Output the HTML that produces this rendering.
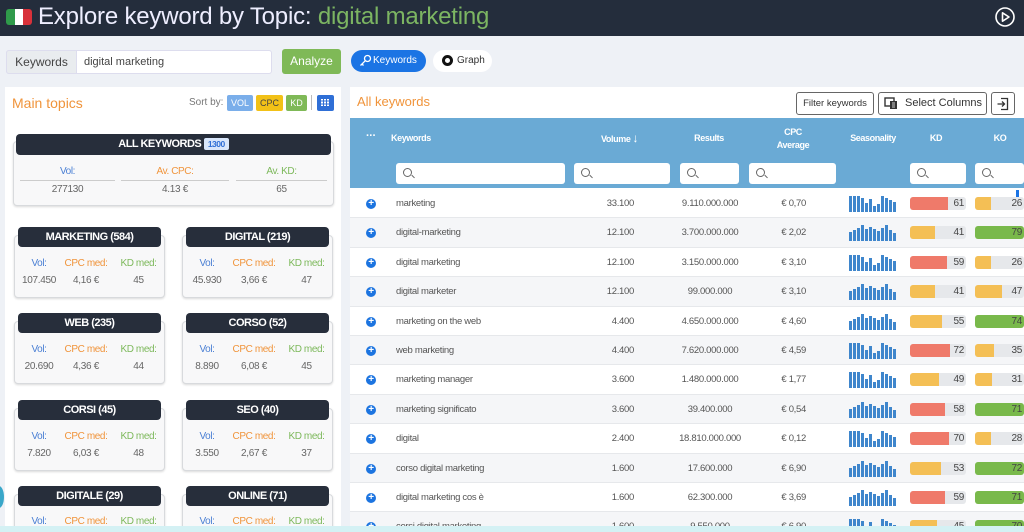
<!DOCTYPE html>
<html style="overflow:hidden;width:1024px;height:532px"><head><meta charset="utf-8"><style>
*{box-sizing:border-box;margin:0;padding:0}
html,body{overflow:hidden}
body{width:1024px;height:532px;background:#eef1f6;font-family:"Liberation Sans",sans-serif;font-size:11px;color:#555}
#w{position:relative;width:1024px;height:532px;overflow:hidden}
.a{position:absolute}
.hdr{left:0;top:0;width:1024px;height:36px;background:#242d3c}
.card{position:absolute;border:1px solid #d8dadd;border-radius:4px;background:#f8f8f9;box-shadow:0 1px 2px rgba(0,0,0,.15)}
.ch{position:absolute;background:#272e3b;color:#fff;border-radius:4px;font-size:11px;text-align:center;line-height:20px;height:20px;font-weight:bold;letter-spacing:-.5px}
.lb{position:absolute;font-size:10px;text-align:center;letter-spacing:-.4px}
.vl{position:absolute;font-size:10px;text-align:center;color:#666;letter-spacing:-.3px}
.bl{color:#4a7fd4}.or{color:#f0943b}.gr{color:#7cb85a}
.row{position:absolute;left:350px;width:674px;height:29.4px;border-bottom:1px solid #e6e8eb;font-size:9.5px;color:#555;letter-spacing:-.3px}
.row span{position:absolute;top:0;line-height:29px}
.pl{left:16px;top:10px!important;width:10px;height:10px;border-radius:50%;background:#1c74e0;line-height:10px!important;color:#fff;font-size:10px;text-align:center;font-weight:bold}
.kd,.ko{position:absolute;top:8px;height:13px;background:#e6e8eb;border-radius:3px;overflow:hidden}
.kd{left:560px;width:56px}.ko{left:625px;width:49px}
.kd i,.ko i{position:absolute;left:0;top:0;bottom:0}
.kd b,.ko b{position:absolute;right:2px;top:0;line-height:13px;font-weight:normal;font-size:10px;color:#444}
.r{background:#ef7a6a}.y{background:#f4bf55}.g{background:#79b94b}
.sb{position:absolute;top:6px;left:499px}
.srch{position:absolute;top:163px;height:21px;background:#fff;border-radius:3px}
.srch:before{content:"";position:absolute;left:7px;top:5px;width:7px;height:7px;border:1.3px solid #666;border-radius:50%}
.srch:after{content:"";position:absolute;left:15px;top:13px;width:4px;height:1.3px;background:#666;transform:rotate(45deg)}
.th{position:absolute;color:#fff;font-size:9px;font-weight:bold;text-align:center;letter-spacing:-.4px}
</style></head><body><div id="w">
<div class="a hdr"></div>
<div class="a" style="left:6px;top:9px;width:26px;height:16px;border-radius:3px;overflow:hidden;display:flex"><div style="flex:1;background:#2f9a4a"></div><div style="flex:1;background:#fff"></div><div style="flex:1;background:#d8313a"></div></div>
<div class="a" style="left:38px;top:3px;font-size:24px;color:#eef;line-height:28px;letter-spacing:-.2px">Explore keyword by Topic: <span style="color:#7cb562">digital marketing</span></div>
<svg class="a" style="left:994px;top:6px" width="22" height="22" viewBox="0 0 22 22"><circle cx="11" cy="11" r="9" fill="none" stroke="#fff" stroke-width="1.6"/><path d="M8.5 6.8 L15 11 L8.5 15.2 Z" fill="none" stroke="#fff" stroke-width="1.6" stroke-linejoin="round"/></svg>

<div class="a" style="left:6px;top:50px;width:266px;height:24px;border:1px solid #dde;border-radius:3px;background:#fff"></div>
<div class="a" style="left:6px;top:50px;width:71px;height:24px;background:#e9ecef;border-radius:3px 0 0 3px;border:1px solid #dde;font-size:12px;line-height:22px;text-align:center;color:#444">Keywords</div>
<div class="a" style="left:84px;top:50px;font-size:11px;line-height:24px;color:#444">digital marketing</div>
<div class="a" style="left:282px;top:49px;width:59px;height:25px;background:#7fb957;border-radius:3px;color:#fff;font-size:12px;line-height:25px;text-align:center">Analyze</div>
<div class="a" style="left:351px;top:50px;width:75px;height:22px;background:#1b74e4;border-radius:11px;color:#fff;font-size:10px;line-height:22px;padding-left:22px">Keywords</div>
<svg class="a" style="left:359px;top:54px" width="13" height="13" viewBox="0 0 13 13"><circle cx="8.5" cy="4.5" r="3" fill="none" stroke="#fff" stroke-width="1.3"/><path d="M6.3 6.7 L1.5 11.5 M3 10 L4.5 11.5" stroke="#fff" stroke-width="1.3" fill="none"/></svg>
<div class="a" style="left:433px;top:50px;width:59px;height:22px;background:#fff;border-radius:11px;font-size:10px;line-height:22px;padding-left:24px;color:#333">Graph</div>
<div class="a" style="left:442px;top:55px;width:11px;height:11px;border-radius:50%;border:3px solid #111;background:#fff"></div>

<div class="a" style="left:5px;top:87px;width:336px;height:445px;background:#fff"></div>
<div class="a" style="left:12px;top:95px;font-size:14px;color:#f0943b">Main topics</div>
<div class="a" style="left:189px;top:97px;font-size:10px;color:#777">Sort by:</div>
<div class="a" style="left:227px;top:95px;width:26px;height:16px;background:#7aaeea;border-radius:2px;color:#fff;font-size:9px;text-align:center;line-height:16px">VOL</div>
<div class="a" style="left:256px;top:95px;width:27px;height:16px;background:#f2c117;border-radius:2px;color:#444;font-size:9px;text-align:center;line-height:16px">CPC</div>
<div class="a" style="left:286px;top:95px;width:21px;height:16px;background:#7fb957;border-radius:2px;color:#fff;font-size:9px;text-align:center;line-height:16px">KD</div>
<div class="a" style="left:311px;top:95px;width:1px;height:15px;background:#bbb"></div>
<div class="a" style="left:317px;top:95px;width:17px;height:16px;background:#2f6fd6;border-radius:2px"></div>
<div class="a" style="left:321px;top:99px;width:9px;height:8px;background:repeating-linear-gradient(90deg,#fff 0 2px,transparent 2px 3px);"></div>
<div class="a" style="left:321px;top:99px;width:9px;height:8px;background:repeating-linear-gradient(0deg,#2f6fd6 0 1px,transparent 1px 2.7px)"></div>

<div class="card" style="left:13px;top:141px;width:321px;height:65px"></div>
<div class="ch" style="left:16px;top:134px;width:315px;height:21px;line-height:21px">ALL KEYWORDS <span style="background:#d8e6fb;color:#2f6fd6;font-size:8.5px;padding:1px 4px;border-radius:2px">1300</span></div>
<div class="lb bl" style="left:20px;top:166px;width:95px">Vol:</div>
<div class="lb or" style="left:121px;top:166px;width:108px">Av. CPC:</div>
<div class="lb gr" style="left:236px;top:166px;width:91px">Av. KD:</div>
<div class="a" style="left:20px;top:180px;width:95px;height:1px;background:#ccc"></div>
<div class="a" style="left:121px;top:180px;width:108px;height:1px;background:#ccc"></div>
<div class="a" style="left:236px;top:180px;width:91px;height:1px;background:#ccc"></div>
<div class="vl" style="left:20px;top:184px;width:95px">277130</div>
<div class="vl" style="left:121px;top:184px;width:108px">4.13 €</div>
<div class="vl" style="left:236px;top:184px;width:91px">65</div>

<div class="card" style="left:14px;top:235px;width:151px;height:63px"></div><div class="ch" style="left:18px;top:227px;width:143px">MARKETING (584)</div>
<div class="card" style="left:182px;top:235px;width:151px;height:63px"></div><div class="ch" style="left:186px;top:227px;width:143px">DIGITAL (219)</div>
<div class="card" style="left:14px;top:321px;width:151px;height:63px"></div><div class="ch" style="left:18px;top:313px;width:143px">WEB (235)</div>
<div class="card" style="left:182px;top:321px;width:151px;height:63px"></div><div class="ch" style="left:186px;top:313px;width:143px">CORSO (52)</div>
<div class="card" style="left:14px;top:408px;width:151px;height:63px"></div><div class="ch" style="left:18px;top:400px;width:143px">CORSI (45)</div>
<div class="card" style="left:182px;top:408px;width:151px;height:63px"></div><div class="ch" style="left:186px;top:400px;width:143px">SEO (40)</div>
<div class="card" style="left:14px;top:494px;width:151px;height:63px"></div><div class="ch" style="left:18px;top:486px;width:143px">DIGITALE (29)</div>
<div class="card" style="left:182px;top:494px;width:151px;height:63px"></div><div class="ch" style="left:186px;top:486px;width:143px">ONLINE (71)</div>

<div class="lb bl" style="left:20px;top:258px;width:38px">Vol:</div><div class="lb or" style="left:62px;top:258px;width:48px">CPC med:</div><div class="lb gr" style="left:116px;top:258px;width:45px">KD med:</div>
<div class="vl" style="left:20px;top:275px;width:38px">107.450</div><div class="vl" style="left:62px;top:275px;width:48px">4,16 €</div><div class="vl" style="left:116px;top:275px;width:45px">45</div>
<div class="lb bl" style="left:188px;top:258px;width:38px">Vol:</div><div class="lb or" style="left:230px;top:258px;width:48px">CPC med:</div><div class="lb gr" style="left:284px;top:258px;width:45px">KD med:</div>
<div class="vl" style="left:188px;top:275px;width:38px">45.930</div><div class="vl" style="left:230px;top:275px;width:48px">3,66 €</div><div class="vl" style="left:284px;top:275px;width:45px">47</div>

<div class="lb bl" style="left:20px;top:344px;width:38px">Vol:</div><div class="lb or" style="left:62px;top:344px;width:48px">CPC med:</div><div class="lb gr" style="left:116px;top:344px;width:45px">KD med:</div>
<div class="vl" style="left:20px;top:361px;width:38px">20.690</div><div class="vl" style="left:62px;top:361px;width:48px">4,36 €</div><div class="vl" style="left:116px;top:361px;width:45px">44</div>
<div class="lb bl" style="left:188px;top:344px;width:38px">Vol:</div><div class="lb or" style="left:230px;top:344px;width:48px">CPC med:</div><div class="lb gr" style="left:284px;top:344px;width:45px">KD med:</div>
<div class="vl" style="left:188px;top:361px;width:38px">8.890</div><div class="vl" style="left:230px;top:361px;width:48px">6,08 €</div><div class="vl" style="left:284px;top:361px;width:45px">45</div>

<div class="lb bl" style="left:20px;top:431px;width:38px">Vol:</div><div class="lb or" style="left:62px;top:431px;width:48px">CPC med:</div><div class="lb gr" style="left:116px;top:431px;width:45px">KD med:</div>
<div class="vl" style="left:20px;top:448px;width:38px">7.820</div><div class="vl" style="left:62px;top:448px;width:48px">6,03 €</div><div class="vl" style="left:116px;top:448px;width:45px">48</div>
<div class="lb bl" style="left:188px;top:431px;width:38px">Vol:</div><div class="lb or" style="left:230px;top:431px;width:48px">CPC med:</div><div class="lb gr" style="left:284px;top:431px;width:45px">KD med:</div>
<div class="vl" style="left:188px;top:448px;width:38px">3.550</div><div class="vl" style="left:230px;top:448px;width:48px">2,67 €</div><div class="vl" style="left:284px;top:448px;width:45px">37</div>

<div class="lb bl" style="left:20px;top:516px;width:38px">Vol:</div><div class="lb or" style="left:62px;top:516px;width:48px">CPC med:</div><div class="lb gr" style="left:116px;top:516px;width:45px">KD med:</div>
<div class="lb bl" style="left:188px;top:516px;width:38px">Vol:</div><div class="lb or" style="left:230px;top:516px;width:48px">CPC med:</div><div class="lb gr" style="left:284px;top:516px;width:45px">KD med:</div>

<div class="a" style="left:350px;top:87px;width:674px;height:445px;background:#fff"></div>
<div class="a" style="left:357px;top:94px;font-size:13px;color:#f0943b">All keywords</div>
<div class="a" style="left:796px;top:92px;width:78px;height:23px;border:1px solid #666;border-radius:3px;font-size:9.5px;line-height:21px;text-align:center;color:#333">Filter keywords</div>
<div class="a" style="left:878px;top:92px;width:109px;height:23px;border:1px solid #666;border-radius:3px;font-size:11px;line-height:21px;color:#333;padding-left:26px">Select Columns</div>
<svg class="a" style="left:884px;top:97px" width="15" height="13" viewBox="0 0 15 13"><rect x="1" y="1" width="9" height="8" fill="none" stroke="#333" stroke-width="1.4"/><rect x="6" y="4" width="7" height="8" fill="#333"/><path d="M8 6h3M8 8h3M8 10h3" stroke="#fff" stroke-width=".8"/></svg>
<div class="a" style="left:991px;top:92px;width:24px;height:23px;border:1px solid #666;border-radius:3px"></div>
<svg class="a" style="left:996px;top:97px" width="14" height="14" viewBox="0 0 14 14"><path d="M5 1.5h6.5v11H5" fill="none" stroke="#333" stroke-width="1.3"/><path d="M1.5 7h7M6 4.5L8.5 7L6 9.5" fill="none" stroke="#333" stroke-width="1.3"/></svg>

<div class="a" style="left:350px;top:118px;width:674px;height:70px;background:#6aaad5"></div>
<div class="th" style="left:366px;top:130px;font-size:11px">···</div>
<div class="th" style="left:391px;top:133px">Keywords</div>
<div class="th" style="left:601px;top:131px;font-size:9px">Volume <span style="font-size:12px;font-weight:normal">↓</span></div>
<div class="th" style="left:680px;top:133px;width:58px">Results</div>
<div class="th" style="left:765px;top:126px;width:56px;line-height:13px">CPC<br>Average</div>
<div class="th" style="left:845px;top:133px;width:56px">Seasonality</div>
<div class="th" style="left:912px;top:133px;width:48px">KD</div>
<div class="th" style="left:976px;top:133px;width:48px">KO</div>
<div class="srch" style="left:396px;width:169px"></div>
<div class="srch" style="left:574px;width:96px"></div>
<div class="srch" style="left:680px;width:59px"></div>
<div class="srch" style="left:749px;width:87px"></div>
<div class="srch" style="left:910px;width:56px"></div>
<div class="srch" style="left:975px;width:49px"></div>
<div class="a" style="left:1016px;top:190px;width:3px;height:12px;background:#1b74e4"></div>

<svg width="0" height="0" style="position:absolute"><defs>
<g id="s1" fill="#3f86cc"><rect x="0" y="1" width="3" height="16"/><rect x="4" y="1" width="3" height="16"/><rect x="8" y="1" width="3" height="16"/><rect x="12" y="3" width="3" height="14"/><rect x="16" y="8" width="3" height="9"/><rect x="20" y="4" width="3" height="13"/><rect x="24" y="11" width="3" height="6"/><rect x="28" y="9" width="3" height="8"/><rect x="32" y="1" width="3" height="16"/><rect x="36" y="3" width="3" height="14"/><rect x="40" y="5" width="3" height="12"/><rect x="44" y="7" width="3" height="10"/></g>
<g id="s2" fill="#3f86cc"><rect x="0" y="8" width="3" height="9"/><rect x="4" y="6" width="3" height="11"/><rect x="8" y="4" width="3" height="13"/><rect x="12" y="1" width="3" height="16"/><rect x="16" y="5" width="3" height="12"/><rect x="20" y="3" width="3" height="14"/><rect x="24" y="5" width="3" height="12"/><rect x="28" y="7" width="3" height="10"/><rect x="32" y="4" width="3" height="13"/><rect x="36" y="1" width="3" height="16"/><rect x="40" y="6" width="3" height="11"/><rect x="44" y="9" width="3" height="8"/></g>
</defs></svg>

<div class="row" style="top:189px"><span class="pl">+</span><span style="left:46px">marketing</span><span style="left:234px;width:50px;text-align:right">33.100</span><span style="left:320px;width:80px;text-align:center">9.110.000.000</span><span style="left:410px;width:46px;text-align:right">€ 0,70</span><svg class="sb" width="48" height="17"><use href="#s1"/></svg><div class="kd"><i class="r" style="width:68%"></i><b>61</b></div><div class="ko"><i class="y" style="width:32%"></i><b>26</b></div></div>
<div class="row" style="top:218.4px;background:#f5f6f8"><span class="pl">+</span><span style="left:46px">digital-marketing</span><span style="left:234px;width:50px;text-align:right">12.100</span><span style="left:320px;width:80px;text-align:center">3.700.000.000</span><span style="left:410px;width:46px;text-align:right">€ 2,02</span><svg class="sb" width="48" height="17"><use href="#s2"/></svg><div class="kd"><i class="y" style="width:45%"></i><b>41</b></div><div class="ko"><i class="g" style="width:100%"></i><b>79</b></div></div>
<div class="row" style="top:247.8px"><span class="pl">+</span><span style="left:46px">digital marketing</span><span style="left:234px;width:50px;text-align:right">12.100</span><span style="left:320px;width:80px;text-align:center">3.150.000.000</span><span style="left:410px;width:46px;text-align:right">€ 3,10</span><svg class="sb" width="48" height="17"><use href="#s1"/></svg><div class="kd"><i class="r" style="width:66%"></i><b>59</b></div><div class="ko"><i class="y" style="width:32%"></i><b>26</b></div></div>
<div class="row" style="top:277.2px;background:#f5f6f8"><span class="pl">+</span><span style="left:46px">digital marketer</span><span style="left:234px;width:50px;text-align:right">12.100</span><span style="left:320px;width:80px;text-align:center">99.000.000</span><span style="left:410px;width:46px;text-align:right">€ 3,10</span><svg class="sb" width="48" height="17"><use href="#s2"/></svg><div class="kd"><i class="y" style="width:45%"></i><b>41</b></div><div class="ko"><i class="y" style="width:55%"></i><b>47</b></div></div>
<div class="row" style="top:306.6px"><span class="pl">+</span><span style="left:46px">marketing on the web</span><span style="left:234px;width:50px;text-align:right">4.400</span><span style="left:320px;width:80px;text-align:center">4.650.000.000</span><span style="left:410px;width:46px;text-align:right">€ 4,60</span><svg class="sb" width="48" height="17"><use href="#s2"/></svg><div class="kd"><i class="y" style="width:58%"></i><b>55</b></div><div class="ko"><i class="g" style="width:100%"></i><b>74</b></div></div>
<div class="row" style="top:336px;background:#f5f6f8"><span class="pl">+</span><span style="left:46px">web marketing</span><span style="left:234px;width:50px;text-align:right">4.400</span><span style="left:320px;width:80px;text-align:center">7.620.000.000</span><span style="left:410px;width:46px;text-align:right">€ 4,59</span><svg class="sb" width="48" height="17"><use href="#s1"/></svg><div class="kd"><i class="r" style="width:72%"></i><b>72</b></div><div class="ko"><i class="y" style="width:38%"></i><b>35</b></div></div>
<div class="row" style="top:365.4px"><span class="pl">+</span><span style="left:46px">marketing manager</span><span style="left:234px;width:50px;text-align:right">3.600</span><span style="left:320px;width:80px;text-align:center">1.480.000.000</span><span style="left:410px;width:46px;text-align:right">€ 1,77</span><svg class="sb" width="48" height="17"><use href="#s1"/></svg><div class="kd"><i class="y" style="width:52%"></i><b>49</b></div><div class="ko"><i class="y" style="width:34%"></i><b>31</b></div></div>
<div class="row" style="top:394.8px;background:#f5f6f8"><span class="pl">+</span><span style="left:46px">marketing significato</span><span style="left:234px;width:50px;text-align:right">3.600</span><span style="left:320px;width:80px;text-align:center">39.400.000</span><span style="left:410px;width:46px;text-align:right">€ 0,54</span><svg class="sb" width="48" height="17"><use href="#s2"/></svg><div class="kd"><i class="r" style="width:62%"></i><b>58</b></div><div class="ko"><i class="g" style="width:100%"></i><b>71</b></div></div>
<div class="row" style="top:424.2px"><span class="pl">+</span><span style="left:46px">digital</span><span style="left:234px;width:50px;text-align:right">2.400</span><span style="left:320px;width:80px;text-align:center">18.810.000.000</span><span style="left:410px;width:46px;text-align:right">€ 0,12</span><svg class="sb" width="48" height="17"><use href="#s1"/></svg><div class="kd"><i class="r" style="width:70%"></i><b>70</b></div><div class="ko"><i class="y" style="width:32%"></i><b>28</b></div></div>
<div class="row" style="top:453.6px;background:#f5f6f8"><span class="pl">+</span><span style="left:46px">corso digital marketing</span><span style="left:234px;width:50px;text-align:right">1.600</span><span style="left:320px;width:80px;text-align:center">17.600.000</span><span style="left:410px;width:46px;text-align:right">€ 6,90</span><svg class="sb" width="48" height="17"><use href="#s2"/></svg><div class="kd"><i class="y" style="width:56%"></i><b>53</b></div><div class="ko"><i class="g" style="width:100%"></i><b>72</b></div></div>
<div class="row" style="top:483px"><span class="pl">+</span><span style="left:46px">digital marketing cos è</span><span style="left:234px;width:50px;text-align:right">1.600</span><span style="left:320px;width:80px;text-align:center">62.300.000</span><span style="left:410px;width:46px;text-align:right">€ 3,69</span><svg class="sb" width="48" height="17"><use href="#s2"/></svg><div class="kd"><i class="r" style="width:62%"></i><b>59</b></div><div class="ko"><i class="g" style="width:100%"></i><b>71</b></div></div>
<div class="row" style="top:512.4px;background:#f5f6f8"><span class="pl">+</span><span style="left:46px">corsi digital marketing</span><span style="left:234px;width:50px;text-align:right">1.600</span><span style="left:320px;width:80px;text-align:center">9.550.000</span><span style="left:410px;width:46px;text-align:right">€ 6,90</span><svg class="sb" width="48" height="17"><use href="#s1"/></svg><div class="kd"><i class="y" style="width:48%"></i><b>45</b></div><div class="ko"><i class="g" style="width:100%"></i><b>70</b></div></div>

<div class="a" style="left:0;top:526px;width:1024px;height:6px;background:#d4f1f4"></div>
<div class="a" style="left:-6px;top:486px;width:10px;height:22px;border-radius:50%;background:#3aa7c9"></div>
</div></body></html>
